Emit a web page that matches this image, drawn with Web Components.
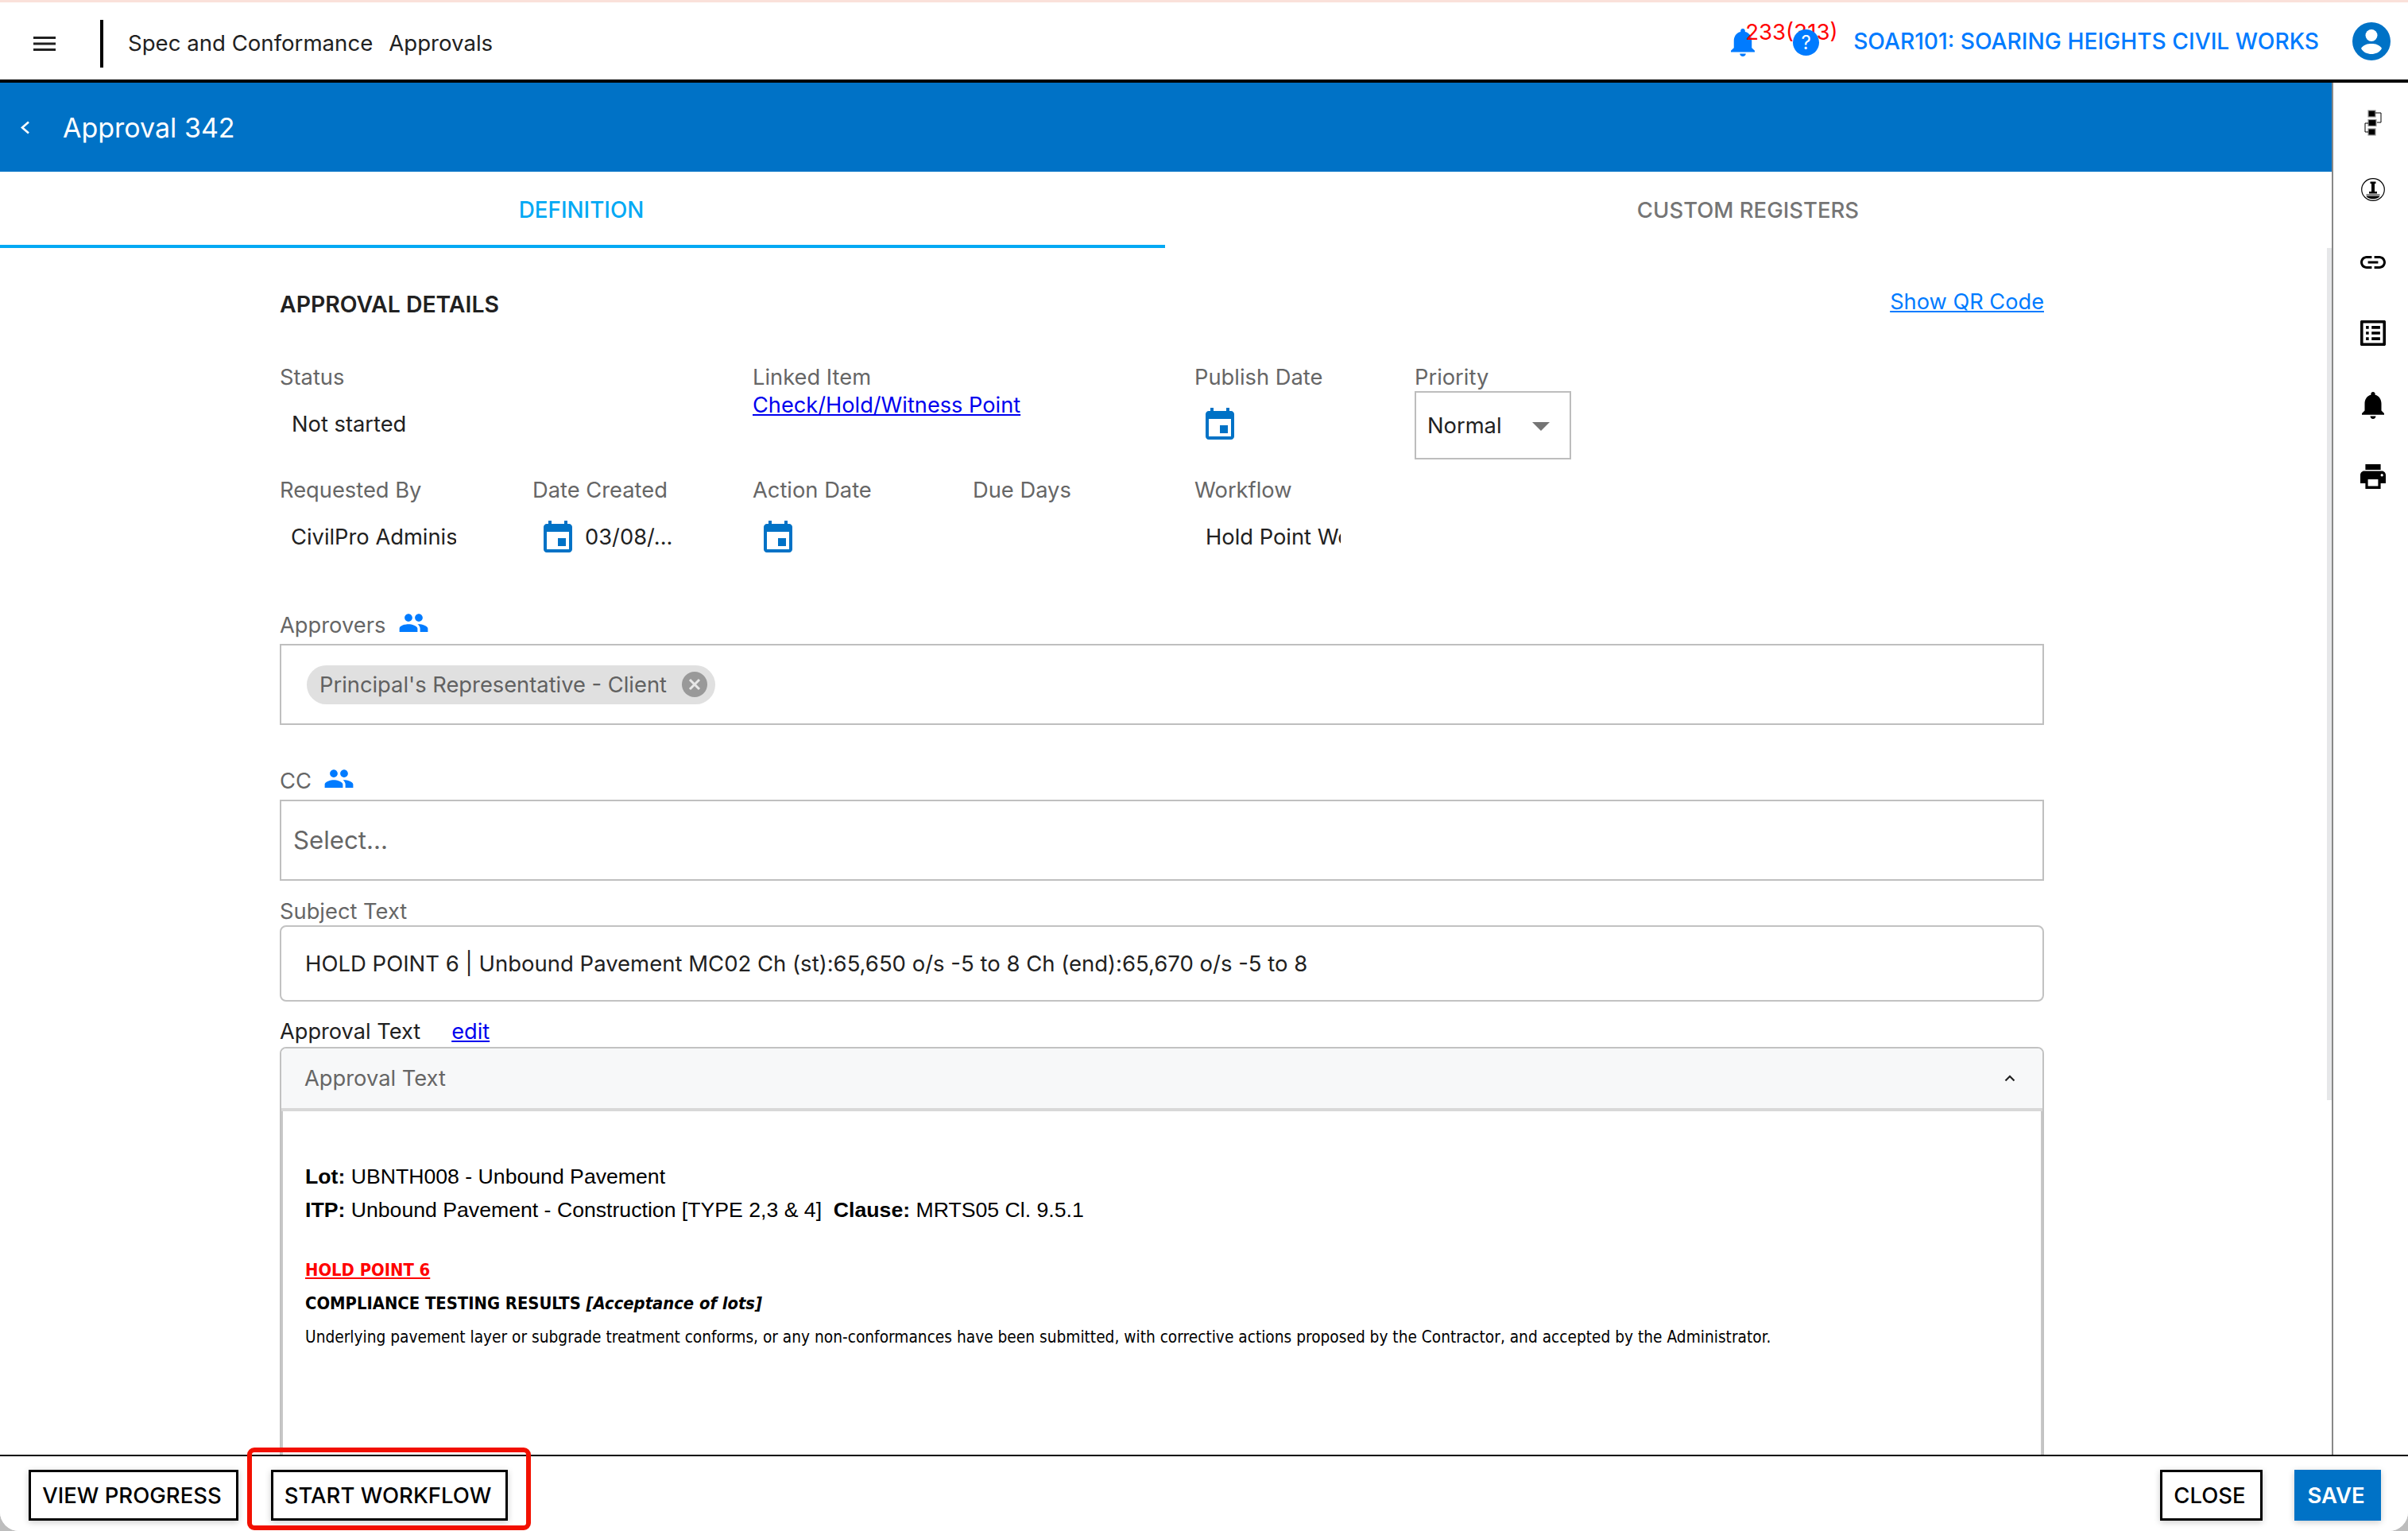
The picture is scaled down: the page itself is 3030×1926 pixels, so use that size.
<!DOCTYPE html>
<html lang="en"><head><meta charset="utf-8"><title>Approval 342</title>
<style>
html,body{margin:0;padding:0;width:3030px;height:1926px;overflow:hidden;background:#bdbdbd;font-family:Inter,"Liberation Sans",sans-serif;color:#212121}
</style></head><body>
<cp-app>
  <cp-topbar slot="top"></cp-topbar>
  <cp-titlebar slot="title">Approval 342</cp-titlebar>
  <cp-tabs slot="tabs"></cp-tabs>
  <cp-details slot="body"></cp-details>
  <cp-rail slot="rail"></cp-rail>
  <cp-footer slot="footer"></cp-footer>
</cp-app>
<script>
const P={
 bell:"M12 22c1.1 0 2-.9 2-2h-4c0 1.1.89 2 2 2zm6-6v-5c0-3.07-1.64-5.64-4.5-6.32V4c0-.83-.67-1.5-1.5-1.5s-1.5.67-1.5 1.5v.68C7.63 5.36 6 7.92 6 11v5l-2 2v1h16v-1l-2-2z",
 print:"M19 8H5c-1.66 0-3 1.34-3 3v6h4v4h12v-4h4v-6c0-1.66-1.34-3-3-3zm-3 11H8v-5h8v5zm3-7c-.55 0-1-.45-1-1s.45-1 1-1 1 .45 1 1-.45 1-1 1zm-1-9H6v4h12V3z",
 link:"M3.9 12c0-1.71 1.39-3.1 3.1-3.1h4V7H7c-2.76 0-5 2.24-5 5s2.24 5 5 5h4v-1.9H7c-1.71 0-3.1-1.39-3.1-3.1zM8 13h8v-2H8v2zm9-6h-4v1.9h4c1.71 0 3.1 1.39 3.1 3.1s-1.39 3.1-3.1 3.1h-4V17h4c2.76 0 5-2.24 5-5s-2.24-5-5-5z",
 list:"M19 5v14H5V5h14m1.1-2H3.9c-.5 0-.9.4-.9.9v16.2c0 .4.4.9.9.9h16.2c.4 0 .9-.5.9-.9V3.9c0-.5-.5-.9-.9-.9zM11 7h6v2h-6V7zm0 4h6v2h-6v-2zm0 4h6v2h-6v-2zM7 7h2v2H7V7zm0 4h2v2H7v-2zm0 4h2v2H7v-2z",
 cal:"M17 12h-5v5h5v-5zM16 1v2H8V1H6v2H5c-1.11 0-1.99.9-1.99 2L3 19c0 1.1.89 2 2 2h14c1.1 0 2-.9 2-2V5c0-1.1-.9-2-2-2h-1V1h-2zm3 18H5V8h14v11z",
 group:"M16 11c1.66 0 2.99-1.34 2.99-3S17.66 5 16 5c-1.66 0-3 1.34-3 3s1.34 3 3 3zm-8 0c1.66 0 2.99-1.34 2.99-3S9.66 5 8 5C6.34 5 5 6.34 5 8s1.34 3 3 3zm0 2c-2.33 0-7 1.17-7 3.5V19h14v-2.5c0-2.33-4.67-3.5-7-3.5zm8 0c-.29 0-.62.02-.97.05 1.16.84 1.97 1.97 1.97 3.45V19h6v-2.5c0-2.33-4.67-3.5-7-3.5z",
 menu:"M3 18h18v-2H3v2zm0-5h18v-2H3v2zm0-7v2h18V6H3z"
};
const svg=(p,vb,w,h,c,st='')=>`<svg xmlns="http://www.w3.org/2000/svg" viewBox="${vb}" width="${w}" height="${h}" preserveAspectRatio="none" style="display:block;flex:none;${st}"><path fill="${c}" d="${p}"/></svg>`;
function def(name,css,html){
  customElements.define(name,class extends HTMLElement{
    constructor(){super();const r=this.attachShadow({mode:'open'});
      r.innerHTML=`<style>${css}</style>`+(typeof html==='function'?html(this):html);}
  });
}
def('cp-app',`
 :host{display:flex;flex-direction:column;width:3030px;height:1926px;background:#fff;border-radius:0 0 24px 24px;overflow:hidden;position:relative}
 .main{flex:1;min-height:0;display:flex}
 .left{width:2934px;border-right:2px solid #888;display:flex;flex-direction:column;min-height:0;position:relative}
 .thumb{position:absolute;left:2928px;top:208px;width:6px;height:1072px;background:#e6e7e9}
 .scroll{flex:1;min-height:0;overflow:hidden}
 .rail{flex:1}
 .mark{position:absolute;left:311px;top:1821px;width:357px;height:104px;box-sizing:border-box;border:6px solid #f21000;border-radius:9px}
`,`<slot name="top"></slot>
 <div class="main"><div class="left"><slot name="title"></slot><slot name="tabs"></slot>
 <div class="scroll"><slot name="body"></slot></div><div class="thumb"></div></div>
 <div class="rail"><slot name="rail"></slot></div></div>
 <slot name="footer"></slot><div class="mark"></div>`);

def('cp-topbar',`
 :host{display:flex;align-items:center;flex:none;box-sizing:border-box;height:104px;border-top:3px solid #fae1da;border-bottom:4px solid #000;padding:0 22px 0 42px;font-size:27.6px;color:#212121}
 .sep{width:4px;height:60px;background:#000;margin:6px 31px 0 56px}
 .t{margin-top:4px;white-space:pre}
 .right{margin-left:auto;display:flex;align-items:center}
 .bell{position:relative;width:30px;height:35px;margin:4px 48px 0 0}
 .count{position:absolute;left:18px;top:-12px;color:#f00;font-size:27.6px;line-height:32px;white-space:nowrap}
 .q{position:relative;width:33px;height:33px;border-radius:50%;background:#007bff;color:#fff;font-size:24px;line-height:33px;text-align:center;margin:3px 43px 0 0}
 .co{color:#007bff;font-size:28.2px;font-weight:500;white-space:nowrap;margin-right:42px}
 svg.av{display:block}
`,`${svg(P.menu,'3 6 18 12',28,18,'#212121','margin-top:6px')}
 <div class="sep"></div><div class="t">Spec and Conformance</div><div class="t" style="margin-left:20px">Approvals</div>
 <div class="right"><div class="bell">${svg(P.bell,'4 2.5 16 19.5',30,35,'#007bff')}<div class="count">233(313)</div></div>
 <div class="q">?</div><div class="co">SOAR101: SOARING HEIGHTS CIVIL WORKS</div>
 <svg class="av" viewBox="0 0 48 48" width="48" height="48"><circle cx="24" cy="24" r="24" fill="#0072c6"/><circle cx="24" cy="16.5" r="7.5" fill="#fff"/><path fill="#fff" d="M11 33c3-5 8-6 13-6s10 1 13 6c-3 5-8 7-13 7s-10-2-13-7z"/></svg></div>`);

def('cp-titlebar',`
 :host{display:flex;align-items:center;flex:none;height:112px;background:#0072c6;color:#fff;font-size:34px;padding-left:25px}
 svg{display:block;margin-right:41px}
`,`<svg viewBox="0 0 13 17" width="13" height="17"><path d="M11 1.5 3 8.5l8 7" fill="none" stroke="#fff" stroke-width="2.6"/></svg><slot></slot>`);

def('cp-tabs',`
 :host{display:flex;flex:none;height:96px;font-size:27.5px;font-weight:500;line-height:96px;text-align:center;color:#757575}
 div{flex:none;width:1467px;box-sizing:border-box}
 .on{width:1466px;font-size:27.8px;color:#03a9f4;box-shadow:inset 0 -4px 0 #03a9f4;padding-right:3px}
`,`<div class="on">DEFINITION</div><div>CUSTOM REGISTERS</div>`);

def('cp-field',`
 :host{display:block;min-width:0}
 .l{height:36px;line-height:36px;font-size:27.3px;color:#666;white-space:nowrap}
 .v{display:flex;align-items:center;height:80px;font-size:27.3px;color:#212121;white-space:nowrap;overflow:hidden}
 :host([flush]) .v{height:auto;display:block}
`,h=>`<div class="l">${h.getAttribute('label')}</div><div class="v"><slot></slot></div>`);

def('cp-cal',`:host{display:block;flex:none;margin-left:14px}`,svg(P.cal,'3 1 18 20',36,40,'#0072c6'));

def('cp-select',`
 :host{display:flex;align-items:center;justify-content:space-between;box-sizing:border-box;width:197px;height:86px;margin-top:-1px;border:2px solid #bdbdbd;padding:0 25px 0 14px;font-size:27.3px;color:#212121}
 i{width:0;height:0;border-left:11px solid transparent;border-right:11px solid transparent;border-top:11px solid #757575;margin-top:2px}
`,`<slot></slot><i></i>`);

def('cp-chip',`
 :host{display:inline-flex;align-items:center;box-sizing:border-box;height:49px;border-radius:25px;background:#e0e0e0;color:#616161;font-size:27.3px;padding:0 10px 0 16px;white-space:nowrap}
 svg{display:block;margin-left:19px}
`,`<slot></slot><svg viewBox="0 0 32 32" width="32" height="32"><circle cx="16" cy="16" r="16" fill="#999"/><path d="M10 10l12 12M22 10 10 22" stroke="#e8e8e8" stroke-width="3"/></svg>`);

def('cp-peoplelabel',`
 :host{display:flex;align-items:center;height:36px;font-size:27.3px;color:#666}
 svg{margin-left:var(--g,16px);margin-top:-6px}
`,`<slot></slot>${svg(P.group,'0 0 24 24',39,39,'#007bff')}`);

def('cp-box',`
 :host{display:flex;align-items:center;box-sizing:border-box;height:102px;border:2px solid #bfbfbf;padding:0 15px;font-size:31.2px;color:#666}
 :host([chips]){padding-left:32px;margin-top:6px}
 :host([sel]){margin-top:6px}
`,`<slot></slot>`);

def('cp-accordion',`
 :host{display:block;box-sizing:border-box;height:640px;margin-top:1px;border:2px solid #c2c2c2;border-radius:8px 8px 0 0;overflow:hidden}
 .h{box-sizing:border-box;height:79px;background:#f7f8f9;border-bottom:4px solid #d8d8d8;display:flex;align-items:center;justify-content:space-between;padding:0 34px 0 29px;font-size:27.3px;color:#666}
 svg{display:block}
 .b{height:600px;border:solid #c8c8c8;border-width:0 2px;padding:61px 0 0 28px;color:#000}
`,`<div class="h"><span>Approval Text</span><svg viewBox="0 0 14 9" width="14" height="9"><path d="M1.5 7.5 7 2l5.5 5.5" fill="none" stroke="#222" stroke-width="2.2"/></svg></div><div class="b"><slot></slot></div>`);

def('cp-details',`
 :host{display:block;padding:50px 0 0 352px;width:2220px}
 .head{display:flex;justify-content:space-between;align-items:center;height:40px}
 h2{margin:0;font-size:28.4px;font-weight:600;color:#212121}
 a{color:#007bff;font-size:27.2px;margin-top:-6px}
 .grid{display:grid;grid-template-columns:318px 277px 277px 279px 277px 1fr;row-gap:21px;margin-top:55px}
 .s2{grid-column:span 2}
 .lnk{display:block;color:#0000ee;font-size:27.2px;line-height:34px;text-decoration:underline}
 .pri{display:block}
 .plab{height:36px;line-height:36px;font-size:27.3px;color:#666}
 .sub{margin-top:21px;height:36px;line-height:36px;font-size:27.3px;color:#666}
 .subj{display:flex;align-items:center;box-sizing:border-box;height:96px;margin-top:-1px;border:2px solid #c2c2c2;border-radius:8px;padding:0 30px;font-size:27.5px;color:#212121}
 .apx{display:flex;margin-top:20px;height:36px;line-height:36px;font-size:27.2px;color:#212121}
 .apx a{color:#0000ee;margin:0 0 0 39px;text-decoration:underline}
 .pad{padding-left:15px}
 .clip{display:block;overflow:hidden}
 .l1{font:26.65px/42px "Liberation Sans",Arial,sans-serif;white-space:nowrap}
 .hp{font:bold 21.8px/42px "DejaVu Sans",sans-serif;font-stretch:condensed;color:#f00;text-decoration:underline;margin-top:34px}
 .ct{font:bold 21.8px/42px "DejaVu Sans",sans-serif;font-stretch:condensed}
 .un{font:20.7px/42px "DejaVu Sans",sans-serif;font-stretch:condensed;white-space:nowrap}
 b{font-weight:bold}
`,`<div class="head"><h2>APPROVAL DETAILS</h2><a href="#">Show QR Code</a></div>
 <div class="grid">
  <cp-field class="s2" label="Status"><span class="pad">Not started</span></cp-field>
  <cp-field class="s2" label="Linked Item" flush><a class="lnk" href="#" style="margin:0">Check/Hold/Witness Point</a></cp-field>
  <cp-field label="Publish Date"><cp-cal></cp-cal></cp-field>
  <div class="pri"><div class="plab">Priority</div><cp-select>Normal</cp-select></div>
  <cp-field label="Requested By"><span class="clip pad" style="width:208px;padding-left:14px;box-sizing:content-box">CivilPro Administrator</span></cp-field>
  <cp-field label="Date Created"><cp-cal></cp-cal><span style="margin-left:16px">03/08/...</span></cp-field>
  <cp-field label="Action Date"><cp-cal></cp-cal></cp-field>
  <cp-field label="Due Days"></cp-field>
  <cp-field label="Workflow"><span class="clip pad" style="width:170px;padding-left:14px">Hold Point Workflow</span></cp-field>
 </div>
 <cp-peoplelabel style="margin-top:53px">Approvers</cp-peoplelabel>
 <cp-box chips><cp-chip>Principal's Representative - Client</cp-chip></cp-box>
 <cp-peoplelabel style="margin-top:52px;--g:15px">CC</cp-peoplelabel>
 <cp-box sel>Select...</cp-box>
 <div class="sub">Subject Text</div>
 <div class="subj">HOLD POINT 6 | Unbound Pavement MC02 Ch (st):65,650 o/s -5 to 8 Ch (end):65,670 o/s -5 to 8</div>
 <div class="apx"><span>Approval Text</span><a href="#">edit</a></div>
 <cp-accordion>
  <div class="l1"><b>Lot:</b> UBNTH008 - Unbound Pavement</div>
  <div class="l1"><b>ITP:</b> Unbound Pavement - Construction [TYPE 2,3 &amp; 4]&nbsp; <b>Clause:</b> MRTS05 Cl. 9.5.1</div>
  <div class="hp">HOLD POINT 6</div>
  <div class="ct">COMPLIANCE TESTING RESULTS <i>[Acceptance of lots]</i></div>
  <div class="un">Underlying pavement layer or subgrade treatment conforms, or any non-conformances have been submitted, with corrective actions proposed by the Contractor, and accepted by the Administrator.</div>
 </cp-accordion>`);

def('cp-rail',`
 :host{display:flex;flex-direction:column;align-items:center;padding-left:6px;padding-top:34px}
`,`<svg viewBox="0 0 22 33" width="22" height="33" style="display:block"><g fill="#000" stroke="#999" stroke-width="1.2"><rect x="5" y="1" width="9" height="8"/><rect x="5" y="12.5" width="10" height="8"/><rect x="5" y="24" width="9" height="8"/></g><path d="M14 4h7v12h-5M5 17H1v11h4" fill="none" stroke="#000" stroke-width="1"/></svg>
 <svg viewBox="0 0 30 29" width="30" height="29" style="display:block;margin-top:53px"><ellipse cx="15" cy="14.5" rx="14.3" ry="13.8" fill="#fff" stroke="#000" stroke-width="1.2"/><path fill="#000" d="M11.500 4.500h7v2.500h-1.500v10h3v2.500H10V17h3V7h-1.500z"/><path fill="#888" d="M6.500 20h17v2h-17z"/><path fill="#000" d="M6.500 22.500h17c-1 2.500-4.500 3.700-8.500 3.700s-7.500-1.200-8.500-3.700z"/></svg>
 ${svg(P.link,'2 7 20 10',32,16,'#000','margin-top:69px')}
 ${svg(P.list,'3 3 18 18',32,32,'#000','margin-top:65px')}
 ${svg(P.bell,'4 2.5 16 19.5',28,34,'#000','margin-top:58px')}
 ${svg(P.print,'2 3 20 18',32,31,'#000','margin-top:57px')}`);

def('cp-btn',`
 :host{display:flex;align-items:center;justify-content:center;box-sizing:border-box;height:64px;border:3px solid #000;background:#fff;color:#000;font-size:27.5px;font-weight:500;box-shadow:0 2px 8px rgba(0,0,0,.2);white-space:nowrap;padding-right:4px}
 :host([primary]){background:#0072c6;border-color:#0072c6;color:#fff;font-weight:600}
`,`<slot></slot>`);

def('cp-footer',`
 :host{display:flex;flex:none;box-sizing:border-box;height:96px;border-top:2px solid #000;padding:17px 34px 0 36px;background:#fff}
 .sp{flex:1}
`,`<cp-btn style="width:264px">VIEW PROGRESS</cp-btn><cp-btn style="width:298px;margin-left:41px">START WORKFLOW</cp-btn><div class="sp"></div>
 <cp-btn style="width:129px">CLOSE</cp-btn><cp-btn primary style="width:109px;margin-left:40px">SAVE</cp-btn>`);
</script>
</body></html>
